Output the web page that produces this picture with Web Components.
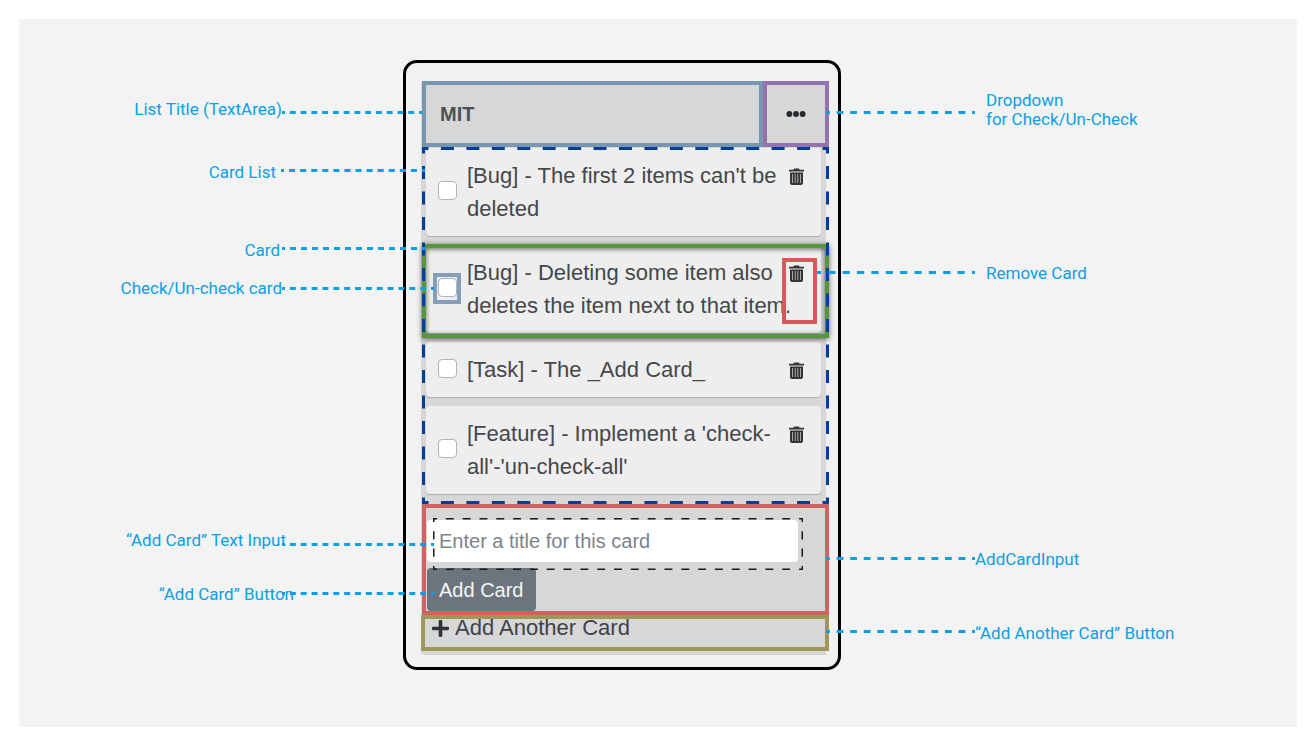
<!DOCTYPE html>
<html lang="en">
<head>
<meta charset="utf-8">
<title>Task list component map</title>
<style>
  body { margin: 19px 18px 23px 19px; background: #fff; font-family: "Liberation Sans", Arial, sans-serif; }
</style>
</head>
<body>
<diagram-canvas>
  <board-frame>
    <list-header name="MIT"></list-header>
    <card-list>
      <task-card>[Bug] - The first 2 items can't be deleted</task-card>
      <task-card marked>[Bug] - Deleting some item also deletes the item next to that item.</task-card>
      <task-card>[Task] - The _Add Card_</task-card>
      <task-card>[Feature] - Implement a 'check-all'-'un-check-all'</task-card>
    </card-list>
    <add-card-input></add-card-input>
    <add-another-card>Add Another Card</add-another-card>

    <call-out slot="notes" side="left" x="19" y="49" length="140" drop="3">List Title (TextArea)</call-out>
    <call-out slot="notes" side="left" x="22" y="112" length="144" gap="5" drop="-2">Card List</call-out>
    <call-out slot="notes" side="left" x="22" y="190" length="143" gap="2" drop="-2">Card</call-out>
    <call-out slot="notes" side="left" x="31" y="228" length="152">Check/Un-check card</call-out>
    <call-out slot="notes" side="left" x="31" y="480" length="152" gap="-4" drop="4">“Add Card” Text Input</call-out>
    <call-out slot="notes" side="left" x="31" y="534" length="152" gap="-12" drop="-1">“Add Card” Button</call-out>
    <call-out slot="notes" side="right" x="423" y="40" length="149" gap="11" drop="12">Dropdown<br>for Check/Un-Check</call-out>
    <call-out slot="notes" side="right" x="414" y="213" length="158" gap="11" drop="-1">Remove Card</call-out>
    <call-out slot="notes" side="right" x="423" y="499" length="149" drop="-1">AddCardInput</call-out>
    <call-out slot="notes" side="right" x="423" y="573" length="149" drop="-2">“Add Another Card” Button</call-out>
  </board-frame>
</diagram-canvas>

<script>
const define = (name, html, setup) => customElements.define(name, class extends HTMLElement {
  constructor() {
    super();
    const t = document.createElement('template');
    t.innerHTML = html;
    this.attachShadow({ mode: 'open' }).append(t.content.cloneNode(true));
  }
  connectedCallback() { if (setup) setup(this, this.shadowRoot); }
});

define('diagram-canvas', `
  <style>
    :host { display: grid; grid-template-columns: 384fr 438px 456fr; padding: 41px 0 57px; background: #f3f3f3; }
    ::slotted(*) { grid-column: 2; }
  </style>
  <slot></slot>`);

define('board-frame', `
  <style>
    :host { display: block; position: relative; }
    .frame { border: 3px solid #000; border-radius: 14px; background: #f1f1f1; padding: 18px 9px 12px 15px; }
    .board { display: flex; flex-direction: column; padding-bottom: 4px;
      background: linear-gradient(#d7d7d7, #d7d7d7) no-repeat 0 0 / calc(100% - 3px) 100%; border-radius: 4px; }
  </style>
  <div class="frame"><div class="board"><slot></slot></div></div>
  <slot name="notes"></slot>`);

define('list-header', `
  <style>
    :host { display: flex; margin-left: 1px; height: 66px; }
    textarea { flex: 1; box-sizing: border-box; min-width: 0; margin: 0; padding: 17px 14px; resize: none; overflow: hidden;
      border: 4px solid #7896b0; border-radius: 0; background: #d7d7d7; color: #4d5257; font: bold 20px/24px "Liberation Sans", Arial, sans-serif; }
    button { width: 66px; padding: 0; border: 4px solid #9273ac; background: #d7d7d7; color: #23282d; }
    svg { display: block; margin: auto; }
  </style>
  <textarea rows="1" aria-label="List title"></textarea>
  <button aria-label="List actions"><svg width="20" height="6" viewBox="0 0 20 6" fill="currentColor"><circle cx="3.400" cy="3" r="2.900"/><circle cx="10" cy="3" r="2.900"/><circle cx="16.600" cy="3" r="2.900"/></svg></button>`,
  (el, root) => { root.querySelector('textarea').value = el.getAttribute('name'); });

define('card-list', `
  <style>
    :host { display: block; position: relative; margin-left: 1px; padding: 1px 8px 10px 4px; }
    .cards { display: flex; flex-direction: column; gap: 9px; }
    svg { position: absolute; inset: 0; width: 100%; height: 100%; z-index: 2; pointer-events: none; overflow: hidden; }
    line { stroke: #033e9b; stroke-width: 6; stroke-dasharray: 26 25; stroke-dashoffset: 13; }
  </style>
  <div class="cards"><slot></slot></div>
  <svg aria-hidden="true">
    <line x2="100%" pathLength="816"/>
    <line y1="100%" x2="100%" y2="100%" pathLength="816"/>
    <line y2="100%" pathLength="714"/>
    <line x1="100%" x2="100%" y2="100%" pathLength="714"/>
  </svg>`);

define('task-card', `
  <style>
    :host { display: flex; align-items: center; gap: 10px; position: relative; padding: 11px 17px 11px 12px;
      background: #eee; border-radius: 4px; box-shadow: 0 1px 1px #a9aeb8; }
    :host([marked]) { z-index: 1; }
    input { appearance: none; flex: none; width: 19px; height: 19px; margin: 0 0 3px; box-sizing: border-box;
      border: 1px solid #adb5bd; border-radius: 4px; background: #fff; }
    label { flex: 1; margin-right: -14px; font-size: 22px; line-height: 33px; color: #45474a; }
    button { align-self: flex-start; margin: 9px 0 0; padding: 0; border: 0; background: none; color: #343434; }
    svg { display: block; }
    .mark { display: none; position: absolute; box-sizing: border-box; border: 4px solid; pointer-events: none; }
    :host([marked]) .mark { display: block; }
    .card { inset: -1px -8px -5px -4px; border-color: #57963f; box-shadow: 0 1px 5px rgba(0,0,0,.6), inset 0 1px 5px rgba(0,0,0,.6); }
    .check { left: 7px; top: 28px; width: 28px; height: 31px; border-color: #859fb9; }
    .remove { right: 4px; top: 13px; width: 35px; height: 66px; border-color: #d65a5c; }
  </style>
  <input type="checkbox" id="done">
  <label for="done"><slot></slot></label>
  <button aria-label="Remove card"><svg width="15" height="17" viewBox="0 0 15 17">
    <path fill="currentColor" d="M5 .500h5l.600 1.300H15v1.700H0V1.800h4.400zM1 4.600h13v10.400a2 2 0 0 1-2 2H3a2 2 0 0 1-2-2z"/>
    <path stroke="#a8a8a8" stroke-width="1" d="M3.500 6v9M6.200 6v9M8.800 6v9M11.500 6v9"/></svg></button>
  <span class="mark card"></span><span class="mark check"></span><span class="mark remove"></span>`);

define('add-card-input', `
  <style>
    :host { display: flex; flex-direction: column; align-items: flex-start; margin-left: 1px; border: 4px solid #d06262; padding: 12px 27px 0 1px; }
    .field { position: relative; align-self: stretch; margin-bottom: 6px; }
    input { display: block; box-sizing: border-box; width: 100%; height: 42px; margin: 0; padding: 0 12px; border: 0; border-radius: 4px;
      background: #fff; font: 20px/24px "Liberation Sans", Arial, sans-serif; color: #495057; }
    input::placeholder { color: #7c838a; opacity: 1; }
    button { height: 43px; padding: 0 12px; border: 0; border-radius: 4px; background: #6c757d; color: #f4f5f6; font: 20px/24px "Liberation Sans", Arial, sans-serif; }
    svg { position: absolute; left: 6px; top: -2px; width: calc(100% - 1px); height: 52px; overflow: hidden; pointer-events: none; }
    line { stroke: #1b1b1b; stroke-width: 3; stroke-dasharray: 8 9; stroke-dashoffset: 4; }
  </style>
  <div class="field">
    <input type="text" aria-label="Card title" placeholder="Enter a title for this card">
    <svg aria-hidden="true">
      <line x2="100%" pathLength="374"/>
      <line y1="100%" x2="100%" y2="100%" pathLength="374"/>
      <line y2="100%" pathLength="51"/>
      <line x1="100%" x2="100%" y2="100%" pathLength="51"/>
    </svg>
  </div>
  <button>Add Card</button>`);

define('add-another-card', `
  <style>
    :host { display: block; }
    button { display: flex; align-items: flex-start; gap: 6px; box-sizing: border-box; width: 100%; height: 36px; padding: 0 7px;
      border: 4px solid #9f965a; background: #d7d7d7; color: #3f4246; font: 22px/18px "Liberation Sans", Arial, sans-serif; }
    svg { display: block; margin-top: 1px; }
  </style>
  <button><svg width="17" height="17" viewBox="0 32 448 448" fill="#2f3236"><path d="M416 208H272V64c0-17.670-14.330-32-32-32h-32c-17.670 0-32 14.330-32 32v144H32c-17.670 0-32 14.330-32 32v32c0 17.670 14.330 32 32 32h144v144c0 17.670 14.330 32 32 32h32c17.670 0 32-14.330 32-32V304h144c17.670 0 32-14.330 32-32v-32c0-17.670-14.330-32-32-32z"/></svg><slot></slot></button>`);

/* A label with a dashed leader line; x is the line's end on the board, y the label's vertical centre. */
define('call-out', `
  <style>
    :host { position: absolute; z-index: 3; display: flex; align-items: flex-start; top: calc(var(--y) - 9px);
      font: 17px/19px Roboto, sans-serif; color: #0d9fe3; white-space: nowrap; pointer-events: none; }
    :host([side="left"]) { right: calc(100% - var(--x)); }
    :host([side="right"]) { left: var(--x); flex-direction: row-reverse; }
    :host([side="left"]) span { margin-right: var(--gap); }
    :host([side="right"]) span { margin-left: var(--gap); }
    svg { flex: none; width: var(--length); height: 3px; margin-top: calc(8px + var(--drop)); overflow: hidden; }
    line { stroke: #0d9fe3; stroke-width: 3; }
  </style>
  <span><slot></slot></span>
  <svg aria-hidden="true"><line y1="50%" x2="100%" y2="50%"/></svg>`,
  (el, root) => {
    for (const k of ['x', 'y', 'length', 'gap', 'drop'])
      el.style.setProperty('--' + k, (el.getAttribute(k) || 0) + 'px');
    const left = el.getAttribute('side') === 'left';
    const [dash, space] = left ? [6, 5] : [7, 7];
    const line = root.querySelector('line');
    const period = dash + space;
    line.setAttribute('pathLength', Math.round(el.getAttribute('length') / (left ? 11 : 14)) * period);
    line.setAttribute('stroke-dasharray', dash + ' ' + space);
    line.setAttribute('stroke-dashoffset', 3);
  });
</script>
</body>
</html>
